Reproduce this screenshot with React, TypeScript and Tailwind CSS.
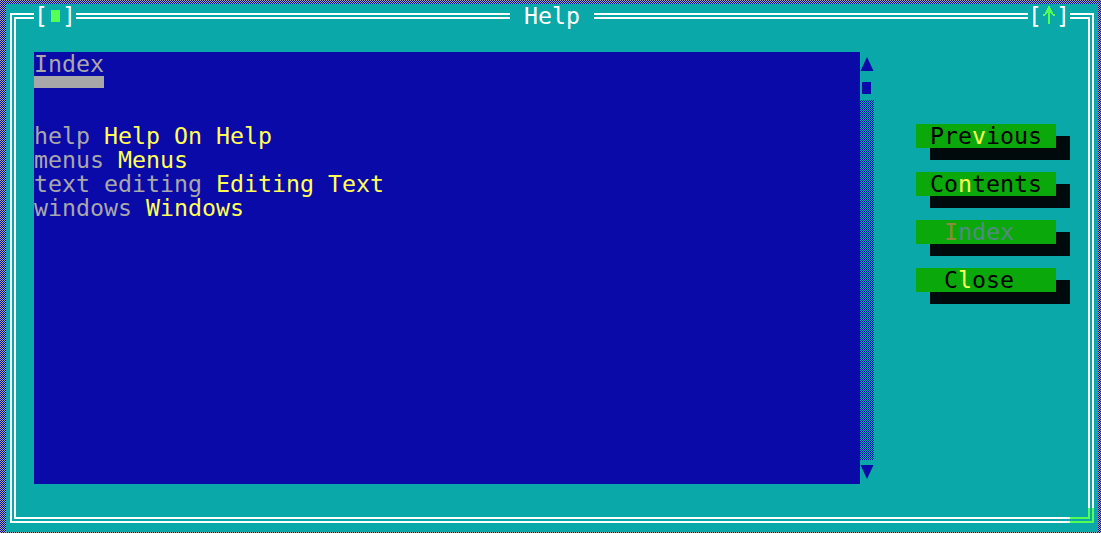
import type { ReactNode } from "react";

const entries = [
  { key: "help", title: "Help On Help" },
  { key: "menus", title: "Menus" },
  { key: "text editing", title: "Editing Text" },
  { key: "windows", title: "Windows" },
];

function Hot({ children }: { children: ReactNode }) {
  return <span className="text-[#ffff55]">{children}</span>;
}

function Button({ children, disabled }: { children: ReactNode; disabled?: boolean }) {
  return (
    <div
      className={`h-[24px] w-[140px] whitespace-pre bg-[#0aa80a] shadow-[14px_12px_0_0_#000a0c] ${
        disabled ? "text-[#528a86]" : "text-black"
      }`}
    >
      {children}
    </div>
  );
}

function ScrollBar() {
  return (
    <div className="flex h-[432px] w-[14px] flex-col">
      <div className="flex h-[24px] items-start pt-[5px]">
        <svg width="14" height="14" viewBox="0 0 14 14" aria-hidden>
          <polygon points="7,0 13.5,14 0.5,14" fill="#0a0aa8" />
        </svg>
      </div>
      <div className="h-[24px] pl-[2px] pt-[6px]">
        <div className="h-[12px] w-[9px] bg-[#0a0aa8]" />
      </div>
      <div className="flex-1 bg-[image:repeating-conic-gradient(#0a0aa8_0%_25%,#0aa8a8_0%_50%)] bg-[length:2px_2px]" />
      <div className="flex h-[24px] items-start pt-[5px]">
        <svg width="14" height="14" viewBox="0 0 14 14" aria-hidden>
          <polygon points="0.5,0 13.5,0 7,14" fill="#0a0aa8" />
        </svg>
      </div>
    </div>
  );
}

export default function App() {
  return (
    <div className="h-[533px] w-[1101px] overflow-hidden bg-[image:repeating-conic-gradient(#0a0aa8_0%_25%,#a8a8a8_0%_50%)] bg-[length:2px_2px] pl-[6px] pt-[4px] font-['DejaVu_Sans_Mono',monospace] text-[23.25px] leading-[24px]">
      <div className="relative h-[528px] w-[1092px] bg-[#0aa8a8] pl-[4px] pt-[9px]">
        {/* double frame */}
        <div className="h-[510px] w-[1084px] border-2 border-white p-[2px]">
          <div className="flex h-full border-2 border-white pl-[18px] pt-[33px]">
            <div className="h-[432px] w-[826px] bg-[#0a0aa8] text-[#a8a8a8]">
              <div>Index</div>
              <div className="h-[24px]">
                <div className="h-[12px] w-[70px] bg-[#a8a8a8]" />
              </div>
              <div className="h-[24px]" />
              {entries.map((e) => (
                <div key={e.key} className="whitespace-pre">
                  {e.key} <Hot>{e.title}</Hot>
                </div>
              ))}
            </div>
            <ScrollBar />
            <div className="ml-[42px] flex flex-col gap-[24px] pt-[72px]">
              <Button>
                {" Pre"}
                <Hot>v</Hot>
                {"ious "}
              </Button>
              <Button>
                {" Co"}
                <Hot>n</Hot>
                {"tents "}
              </Button>
              <Button disabled>
                {"  "}
                <span className="text-[#8c8a3c]">I</span>
                {"ndex   "}
              </Button>
              <Button>
                {"  C"}
                <Hot>l</Hot>
                {"ose   "}
              </Button>
            </div>
          </div>
        </div>

        {/* title bar pieces over the frame */}
        <div className="absolute left-[28px] top-0 flex h-[24px] w-[42px] bg-[#0aa8a8] text-white">
          <span className="w-[14px]">[</span>
          <span className="flex w-[14px] items-start justify-center pt-[6px]">
            <span className="h-[12px] w-[9px] bg-[#55ff55]" />
          </span>
          <span className="w-[14px]">]</span>
        </div>
        <div className="absolute left-[504px] top-0 h-[24px] w-[84px] whitespace-pre bg-[#0aa8a8] text-white">
          {" Help "}
        </div>
        <div className="absolute left-[1022px] top-0 flex h-[24px] w-[42px] bg-[#0aa8a8] text-white">
          <span className="w-[14px]">[</span>
          <span className="flex w-[14px] items-start pl-[1px] pt-[2px]">
            <svg width="12" height="18" viewBox="0 0 12 18" aria-hidden>
              <path
                d="M5 0h2v2h1v2h1v2h1v2h2v2h-2v-1h-1v-1h-1v-1h-1v11h-2v-11h-1v1h-1v1h-1v1h-2v-2h2v-2h1v-2h1v-2h1z"
                fill="#55ff55"
              />
            </svg>
          </span>
          <span className="w-[14px]">]</span>
        </div>

        {/* resize corner */}
        <div className="absolute left-[1064px] top-[504px] h-[15px] w-[24px] border-b-2 border-r-2 border-[#55ff55]" />
        <div className="absolute left-[1064px] top-[504px] h-[11px] w-[20px] border-b-2 border-r-2 border-[#55ff55]" />
      </div>
    </div>
  );
}
